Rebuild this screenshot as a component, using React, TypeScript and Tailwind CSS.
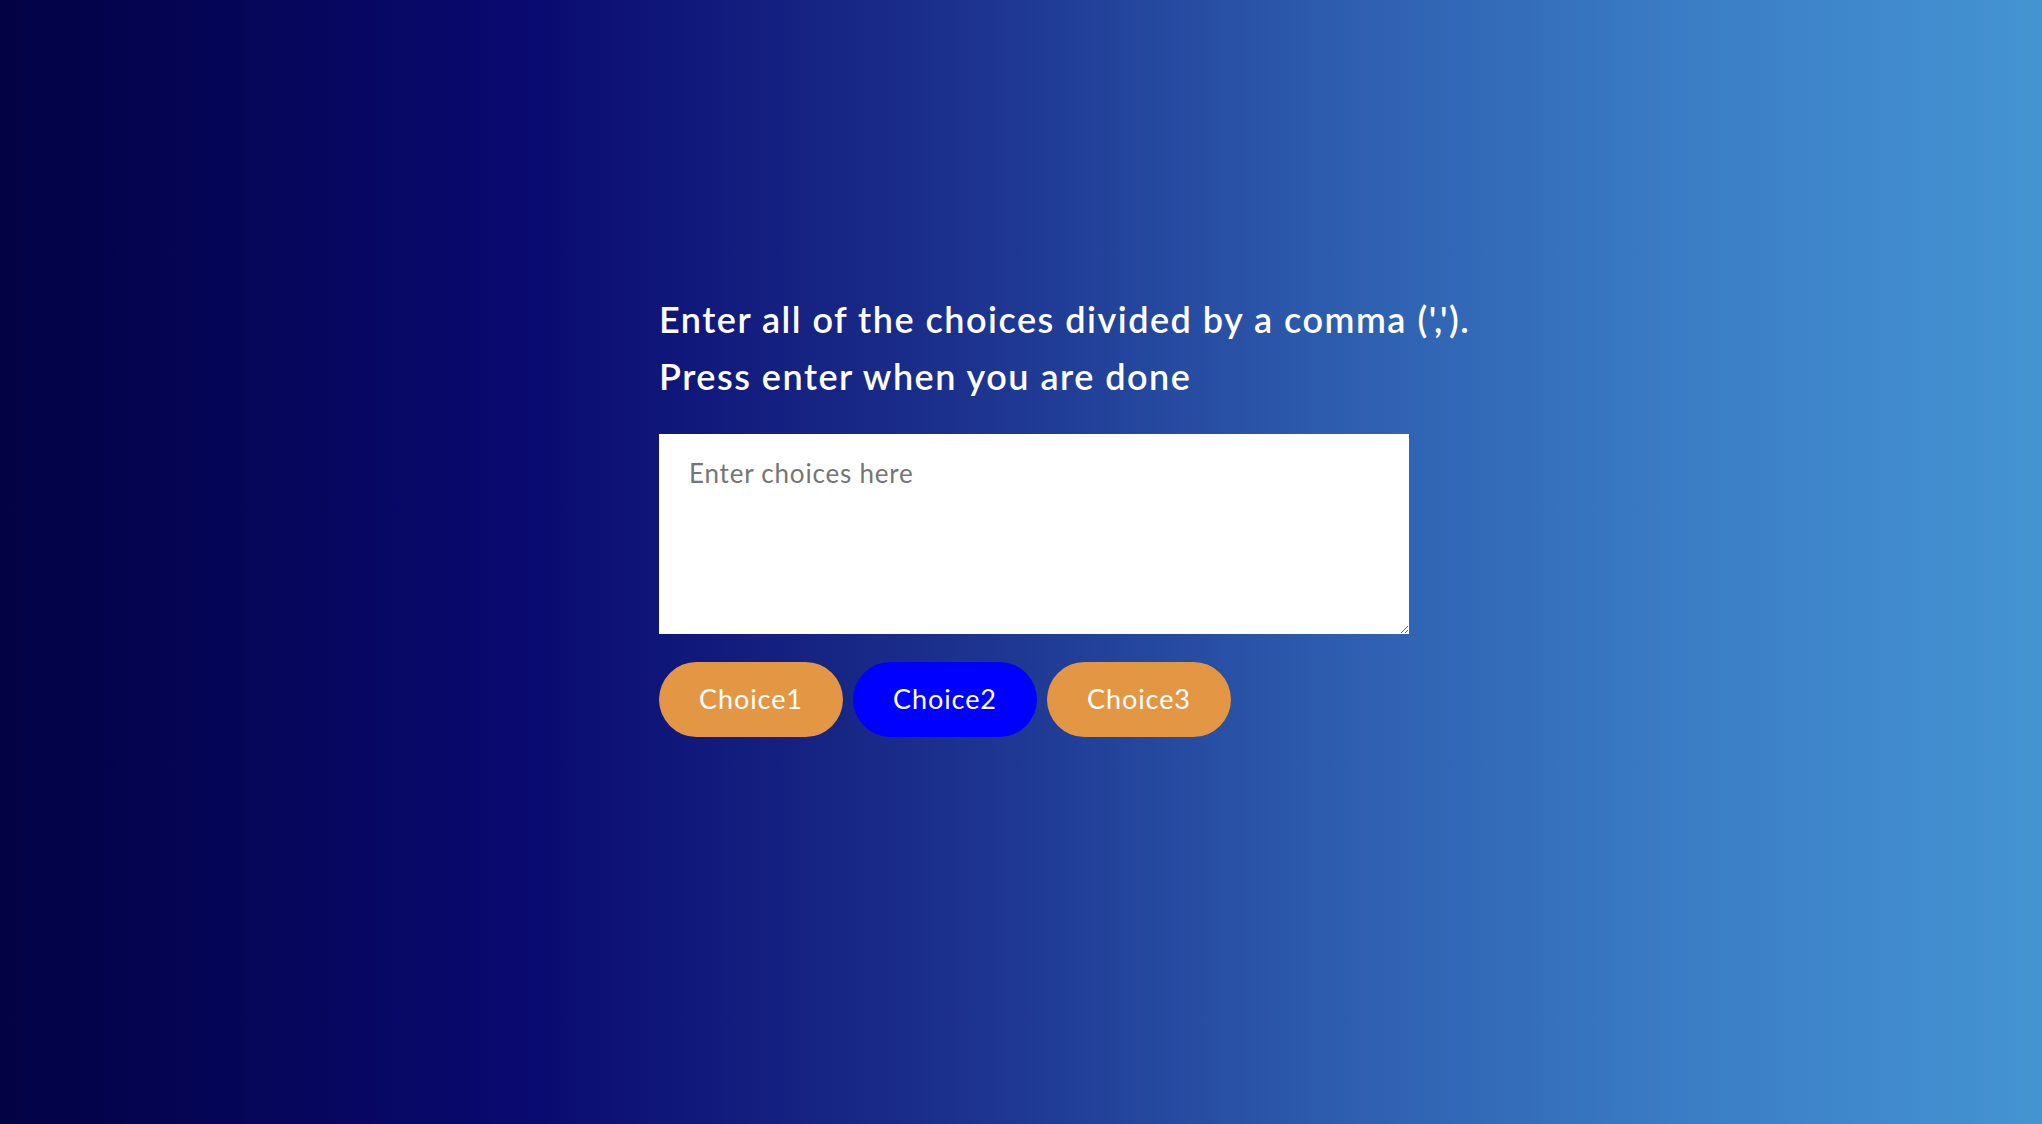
export default function App() {
  return (
    <div
      className="w-full h-[1124px] bg-[linear-gradient(90deg,#020244_0%,#090970_25.5%,#1a2d8a_45%,#2d5cae_65%,#3a7cc5_82%,#4494d2_100%)] pt-[291px] pl-[659px]"
      style={{ fontFamily: "Lato, 'Open Sans', sans-serif" }}
    >
      <h1 className="text-white text-[36px] leading-[57px] font-semibold tracking-[1.5px]">
        Enter all of the choices divided by a comma (&apos;,&apos;).
        <br />
        Press enter when you are done
      </h1>
      <textarea
        className="mt-[29px] block w-[750px] h-[200px] bg-white px-[30px] pt-[20px] text-[26px] tracking-[0.8px] text-gray-800 placeholder:text-[#757575] outline-none"
        placeholder="Enter choices here"
      />
      <div className="mt-[28px] flex gap-[10px]">
        <button className="w-[184px] h-[75px] rounded-full bg-[#e39744] text-white text-[27px] tracking-[0.9px]">
          Choice1
        </button>
        <button className="w-[184px] h-[75px] rounded-full bg-[#0000ff] text-white text-[27px] tracking-[0.9px]">
          Choice2
        </button>
        <button className="w-[184px] h-[75px] rounded-full bg-[#e39744] text-white text-[27px] tracking-[0.9px]">
          Choice3
        </button>
      </div>
    </div>
  );
}
